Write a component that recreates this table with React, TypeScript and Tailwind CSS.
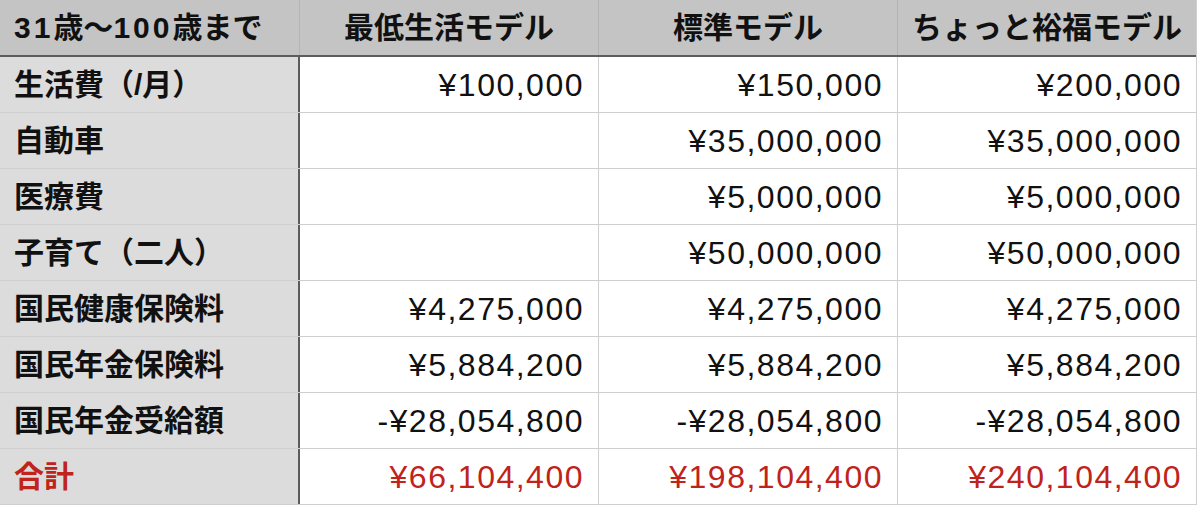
const rows: { label: string; values: string[]; total?: boolean }[] = [
  { label: "生活費（/月）", values: ["¥100,000", "¥150,000", "¥200,000"] },
  { label: "自動車", values: ["", "¥35,000,000", "¥35,000,000"] },
  { label: "医療費", values: ["", "¥5,000,000", "¥5,000,000"] },
  { label: "子育て（二人）", values: ["", "¥50,000,000", "¥50,000,000"] },
  { label: "国民健康保険料", values: ["¥4,275,000", "¥4,275,000", "¥4,275,000"] },
  { label: "国民年金保険料", values: ["¥5,884,200", "¥5,884,200", "¥5,884,200"] },
  { label: "国民年金受給額", values: ["-¥28,054,800", "-¥28,054,800", "-¥28,054,800"] },
  { label: "合計", values: ["¥66,104,400", "¥198,104,400", "¥240,104,400"], total: true },
]

const models = ["最低生活モデル", "標準モデル", "ちょっと裕福モデル"]

export default function App() {
  return (
    <div
      className="w-[1200px] h-[509px] bg-white text-[#111]"
      style={{ fontFamily: '"Liberation Sans", "Noto Sans CJK JP", sans-serif' }}
    >
      <div className="w-[1197px] border-r border-[#cfcfcf]">
        {/* header */}
        <div className="flex h-[57px] bg-[#c3c4c3] border-b-2 border-[#5c5c5c]">
          <div className="w-[300px] shrink-0 border-r border-[#b3b4b3] flex items-center pl-[14px] text-[30px] font-bold">
            <span className="tracking-[3px]">31</span>歳〜<span className="tracking-[3px]">100</span>歳まで
          </div>
          {models.map((h, i) => (
            <div
              key={h}
              className={
                "shrink-0 flex items-center justify-center text-[30px] font-bold " +
                (i < 2 ? "w-[299px] border-r border-[#b3b4b3]" : "w-[298px]")
              }
            >
              {h}
            </div>
          ))}
        </div>

        {/* body */}
        {rows.map((r) => (
          <div key={r.label} className="flex h-[56px] border-b border-[#cfcfcf]">
            <div
              className={
                "w-[300px] shrink-0 bg-[#dcdcdc] border-r-2 border-[#5c5c5c] flex items-center pl-[14px] text-[30px] font-bold " +
                (r.total ? "text-[#c0231b]" : "")
              }
            >
              {r.label}
            </div>
            {r.values.map((v, i) => (
              <div
                key={i}
                className={
                  "shrink-0 flex items-center justify-end pr-[14px] text-[32px] tracking-[1.5px] " +
                  (i < 2 ? "w-[299px] border-r border-[#cfcfcf] " : "w-[298px] ") +
                  (r.total ? "text-[#c0231b]" : "")
                }
              >
                {v}
              </div>
            ))}
          </div>
        ))}
      </div>
    </div>
  )
}
